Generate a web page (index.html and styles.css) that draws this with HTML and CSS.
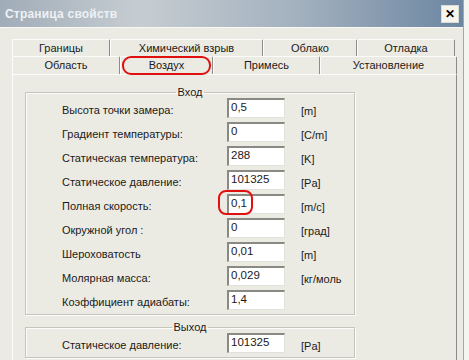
FILE: index.html
```html
<!DOCTYPE html>
<html lang="ru">
<head>
    <meta charset="UTF-8">
    <title>Страница свойств</title>
    <link rel="stylesheet" href="styles.css">
</head>
<body>
<div class="dlg">
    <div class="title">
        <span class="caption">Страница свойств</span>
        <span class="close">&#x2715;</span>
    </div>
    <div class="tabs">
        <div class="row">
            <span class="tab w98">Границы</span>
            <span class="tab w153">Химический взрыв</span>
            <span class="tab w94">Облако</span>
            <span class="tab w98">Отладка</span>
        </div>
        <div class="row">
            <span class="tab w108">Область</span>
            <span class="tab w93 active">Воздух</span>
            <span class="tab w107">Примесь</span>
            <span class="tab w135">Установление</span>
        </div>
        <span class="mark mark-tab"></span>
    </div>
    <div class="page">
        <fieldset class="grp">
            <legend>Вход</legend>
            <div class="fld"><label>Высота точки замера:</label><span class="inp">0,5</span><span class="unit">[m]</span></div>
            <div class="fld"><label>Градиент температуры:</label><span class="inp">0</span><span class="unit">[C/m]</span></div>
            <div class="fld"><label>Статическая температура:</label><span class="inp">288</span><span class="unit">[K]</span></div>
            <div class="fld"><label>Статическое давление:</label><span class="inp">101325</span><span class="unit">[Pa]</span></div>
            <div class="fld"><label>Полная скорость:</label><span class="inp">0,1<span class="mark mark-inp"></span></span><span class="unit">[m/c]</span></div>
            <div class="fld"><label>Окружной угол :</label><span class="inp">0</span><span class="unit">[град]</span></div>
            <div class="fld"><label>Шероховатость</label><span class="inp">0,01</span><span class="unit">[m]</span></div>
            <div class="fld"><label>Молярная масса:</label><span class="inp">0,029</span><span class="unit">[кг/моль</span></div>
            <div class="fld"><label>Коэффициент адиабаты:</label><span class="inp">1,4</span><span class="unit"></span></div>
        </fieldset>
        <fieldset class="grp out">
            <legend>Выход</legend>
            <div class="fld"><label>Статическое давление:</label><span class="inp">101325</span><span class="unit">[Pa]</span></div>
        </fieldset>
    </div>
</div>
</body>
</html>
```

FILE: styles.css
```css
body {
    margin: 0;
    width: 469px;
    height: 360px;
    overflow: hidden;
    background: #f4f4f0;
    font-family: "Liberation Sans", Arial, sans-serif;
    font-size: 11px;
    color: #1a1a1a;
}

.dlg {
    width: 464px;
    height: 360px;
    background: #ecebe3;
    border-right: 1px solid #a8a8a0;
    box-sizing: border-box;
    position: relative;
}

.title {
    height: 27px;
    display: flex;
    align-items: center;
    justify-content: space-between;
    padding: 0 4px 0 5px;
    background: linear-gradient(to right, #a0acb8 0%, #c6cdd2 30%, #a2b0be 65%, #6c86a2 100%);
    border-bottom: 1px solid #f8f8f4;
}
.caption {
    color: #eef1f4;
    font-weight: bold;
    font-size: 12px;
    letter-spacing: 0.2px;
}
.close {
    width: 16px;
    height: 16px;
    line-height: 16px;
    text-align: center;
    background: #f6f5f0;
    border: 1px solid #dcdcd4;
    font-weight: bold;
    font-size: 12px;
    color: #000;
}

.tabs {
    position: relative;
    padding: 11px 0 0 12px;
}
.row {
    display: flex;
    height: 17px;
}
.row + .row {
    height: 18px;
}
.tab {
    box-sizing: border-box;
    text-align: center;
    line-height: 17px;
    font-size: 11px;
    border-top: 1px solid #fcfcfa;
    border-left: 1px solid #fcfcfa;
    border-right: 1px solid #8c8c86;
    border-radius: 2px 2px 0 0;
}
.w98 { width: 98px; }
.w153 { width: 153px; }
.w94 { width: 94px; }
.w108 { width: 108px; }
.w93 { width: 93px; }
.w107 { width: 107px; }
.w135 { width: 137px; }

.page {
    margin-left: 12px;
    width: 445px;
    height: 300px;
    box-sizing: border-box;
    border-top: 1px solid #fcfcfa;
    border-left: 1px solid #fcfcfa;
    border-right: 1px solid #8c8c86;
    padding: 11px 0 0 12px;
}

.grp {
    width: 330px;
    box-sizing: border-box;
    margin: 0;
    padding: 0 0 4px 0;
    border: 1px solid #c6c5bc;
    box-shadow: inset 1px 1px 0 #fcfcfa, 1px 1px 0 #fcfcfa;
}
.grp legend {
    margin: 0 auto;
    padding: 0 2px;
    font-size: 11px;
    line-height: 12px;
}
.grp.out {
    margin-top: 6px;
}

.fld {
    display: grid;
    grid-template-columns: 149px 58px auto;
    column-gap: 16px;
    height: 20px;
    margin: 0 0 4px 36px;
    align-items: center;
}
.fld:last-child {
    margin-bottom: 0;
}
.fld label {
    font-size: 11px;
    padding-top: 3px;
    white-space: nowrap;
}
.inp {
    position: relative;
    height: 20px;
    box-sizing: border-box;
    background: #fff;
    border-top: 2px solid #8a8a84;
    border-left: 2px solid #8a8a84;
    border-right: 1px solid #e2e2dc;
    border-bottom: 1px solid #e2e2dc;
    padding: 1px 0 0 2px;
    font-size: 11.5px;
}
.unit {
    font-size: 11px;
    padding-top: 5px;
    white-space: nowrap;
}

.mark {
    position: absolute;
    border: 2px solid #e01010;
    border-radius: 9px;
}
.mark-tab {
    left: 122px;
    top: 28px;
    width: 85px;
    height: 15px;
}
.mark-inp {
    left: -11px;
    top: -6px;
    width: 31px;
    height: 21px;
    border-radius: 8px;
}
```
